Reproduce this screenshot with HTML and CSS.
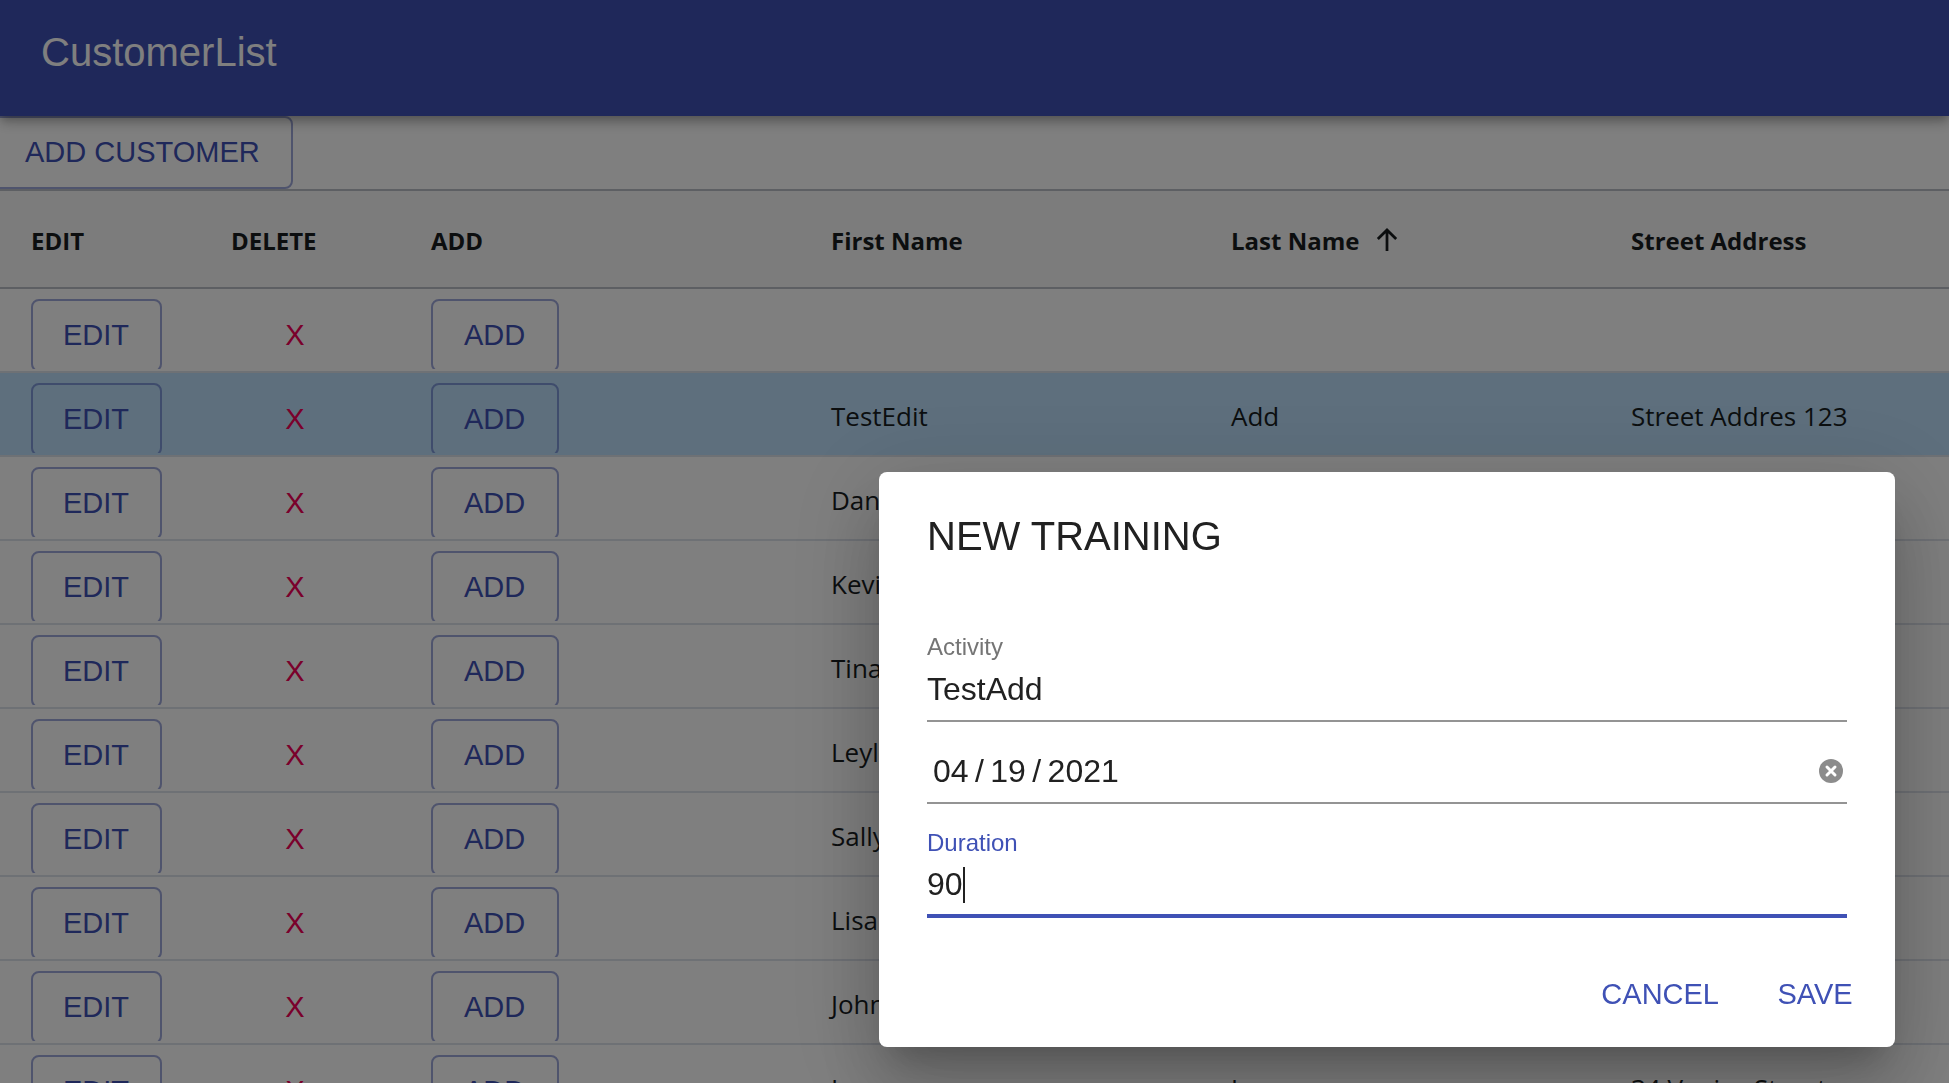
FILE: index.html
```html
<!DOCTYPE html>
<html lang="en">
<head>
<meta charset="utf-8">
<title>CustomerList</title>
<link rel="stylesheet" href="styles.css">
</head>
<body>
<header class="appbar"><h1 class="appbar-title">CustomerList</h1></header>
<main>
<div class="toolbar"><button class="btn btn-outlined" type="button">ADD CUSTOMER</button></div>
<div class="grid-scroll">
<table class="grid">
<colgroup><col class="col-s"><col class="col-s"><col><col><col><col></colgroup>
<thead>
<tr><th>EDIT</th><th>DELETE</th><th>ADD</th><th>First Name</th><th><span class="sorted">Last Name <svg class="sort-icon" viewBox="0 0 24 28" aria-hidden="true"><path d="M12 26V3M2 13L12 3l10 10"/></svg></span></th><th>Street Address</th></tr>
</thead>
<tbody>
<tr><td><div class="clip"><button class="btn btn-outlined" type="button">EDIT</button></div></td><td><div class="clip"><button class="btn btn-delete" type="button">X</button></div></td><td><div class="clip"><button class="btn btn-outlined" type="button">ADD</button></div></td><td></td><td></td><td></td></tr>
<tr class="selected"><td><div class="clip"><button class="btn btn-outlined" type="button">EDIT</button></div></td><td><div class="clip"><button class="btn btn-delete" type="button">X</button></div></td><td><div class="clip"><button class="btn btn-outlined" type="button">ADD</button></div></td><td>TestEdit</td><td>Add</td><td>Street Addres 123</td></tr>
<tr><td><div class="clip"><button class="btn btn-outlined" type="button">EDIT</button></div></td><td><div class="clip"><button class="btn btn-delete" type="button">X</button></div></td><td><div class="clip"><button class="btn btn-outlined" type="button">ADD</button></div></td><td>Dan</td><td></td><td></td></tr>
<tr><td><div class="clip"><button class="btn btn-outlined" type="button">EDIT</button></div></td><td><div class="clip"><button class="btn btn-delete" type="button">X</button></div></td><td><div class="clip"><button class="btn btn-outlined" type="button">ADD</button></div></td><td>Kevin</td><td></td><td></td></tr>
<tr><td><div class="clip"><button class="btn btn-outlined" type="button">EDIT</button></div></td><td><div class="clip"><button class="btn btn-delete" type="button">X</button></div></td><td><div class="clip"><button class="btn btn-outlined" type="button">ADD</button></div></td><td>Tina</td><td></td><td></td></tr>
<tr><td><div class="clip"><button class="btn btn-outlined" type="button">EDIT</button></div></td><td><div class="clip"><button class="btn btn-delete" type="button">X</button></div></td><td><div class="clip"><button class="btn btn-outlined" type="button">ADD</button></div></td><td>Leyla</td><td></td><td></td></tr>
<tr><td><div class="clip"><button class="btn btn-outlined" type="button">EDIT</button></div></td><td><div class="clip"><button class="btn btn-delete" type="button">X</button></div></td><td><div class="clip"><button class="btn btn-outlined" type="button">ADD</button></div></td><td>Sally</td><td></td><td></td></tr>
<tr><td><div class="clip"><button class="btn btn-outlined" type="button">EDIT</button></div></td><td><div class="clip"><button class="btn btn-delete" type="button">X</button></div></td><td><div class="clip"><button class="btn btn-outlined" type="button">ADD</button></div></td><td>Lisa</td><td></td><td></td></tr>
<tr><td><div class="clip"><button class="btn btn-outlined" type="button">EDIT</button></div></td><td><div class="clip"><button class="btn btn-delete" type="button">X</button></div></td><td><div class="clip"><button class="btn btn-outlined" type="button">ADD</button></div></td><td>John</td><td></td><td></td></tr>
<tr><td><div class="clip"><button class="btn btn-outlined" type="button">EDIT</button></div></td><td><div class="clip"><button class="btn btn-delete" type="button">X</button></div></td><td><div class="clip"><button class="btn btn-outlined" type="button">ADD</button></div></td><td>Lea</td><td>Jones</td><td>34 Venice Street</td></tr>
</tbody>
</table>
</div>
</main>
<div class="backdrop">
<form class="dialog" role="dialog" aria-labelledby="dialog-title">
<h2 class="dialog-title" id="dialog-title">NEW TRAINING</h2>
<div class="dialog-content">
<div class="field">
<label class="field-label" for="activity">Activity</label>
<div class="field-box"><input class="field-input" id="activity" type="text" value="TestAdd"></div>
</div>
<div class="field field-date">
<div class="field-box"><input class="field-input" id="date" type="text" aria-label="Date" value="04&#8201;/&#8201;19&#8201;/&#8201;2021"><button class="clear" type="button" aria-label="Clear"><svg viewBox="0 0 24 24" aria-hidden="true"><circle cx="12" cy="12" r="12"/><path d="M8 8l8 8M16 8l-8 8"/></svg></button></div>
</div>
<div class="field field-focused">
<label class="field-label" for="duration">Duration</label>
<div class="field-box"><input class="field-input" id="duration" type="text" value="90"><span class="caret"></span></div>
</div>
</div>
<div class="dialog-actions"><button class="btn btn-text" type="button">CANCEL</button><button class="btn btn-text" type="button">SAVE</button></div>
</form>
</div>
</body>
</html>
```

FILE: styles.css
```css
* { box-sizing: border-box; }

html { height: 100%; }

body {
  height: 100%;
  margin: 0;
  overflow: hidden;
  background: #fff;
  font-family: "Liberation Sans", Arial, sans-serif;
}

.appbar {
  position: relative;
  z-index: 1;
  height: 116px;
  padding: 20px 41px;
  background: #3f51b5;
  color: #fff;
  box-shadow: 0 4px 8px -2px rgba(0, 0, 0, .2), 0 8px 10px 0 rgba(0, 0, 0, .14), 0 2px 20px 0 rgba(0, 0, 0, .12);
}

.appbar-title { margin: 0; font-size: 40px; font-weight: 400; line-height: 64px; }

.toolbar { display: flex; margin-left: -7px; }

.btn {
  min-width: 128px;
  height: 73px;
  padding: 0 16px 2px;
  border: 0;
  border-radius: 8px;
  background: none;
  color: #3f51b5;
  font: 400 29px/48px "Liberation Sans", Arial, sans-serif;
  white-space: nowrap;
}

.btn-outlined { padding: 0 31px 2px 30px; border: 2px solid rgba(63, 81, 181, .5); }

.btn-delete { color: #f50057; }

.grid-scroll { overflow: hidden; border-top: 2px solid #babfc7; }

.grid {
  width: 2000px;
  table-layout: fixed;
  border-collapse: separate;
  border-spacing: 0;
  color: #181d1f;
  font-family: "Segoe UI", "Open Sans", sans-serif;
  font-size: 26px;
}

.col-s { width: 200px; }

.grid th {
  height: 98px;
  padding: 2px 0 0 31px;
  border-bottom: 2px solid #babfc7;
  background: #f8f8f8;
  font-size: 24px;
  font-weight: 700;
  text-align: left;
}

.grid td {
  height: 84px;
  padding: 4px 0 0 31px;
  border-bottom: 2px solid #dde2eb;
  line-height: 36px;
  white-space: nowrap;
}

.grid td:nth-child(-n+3) { padding-top: 0; }

.selected td { background: rgba(33, 150, 243, .3); }

.clip { display: flex; height: 80px; margin-bottom: 2px; padding-top: 10px; overflow: hidden; }
.clip .btn { flex: none; }

.sorted { display: flex; align-items: center; gap: 17px; }
.sort-icon { width: 22px; height: 26px; fill: none; stroke: #181d1f; stroke-width: 3; }

.backdrop {
  position: fixed;
  inset: 0;
  z-index: 2;
  display: flex;
  align-items: flex-end;
  justify-content: flex-end;
  padding: 0 54px 36px;
  background: rgba(0, 0, 0, .5);
}

.dialog {
  width: 1016px;
  max-width: 100%;
  border-radius: 8px;
  background: #fff;
  color: #212121;
  box-shadow: 0 22px 30px -14px rgba(0, 0, 0, .2), 0 48px 76px 6px rgba(0, 0, 0, .14), 0 18px 92px 16px rgba(0, 0, 0, .12);
}

.dialog-title { margin: 0; padding: 32px 48px; font-size: 40px; font-weight: 400; line-height: 64px; }

.dialog-content { padding: 34px 48px 24px; }

.field-label { display: block; height: 24px; color: #757575; font-size: 24px; line-height: 26px; }

.field-box {
  position: relative;
  display: flex;
  align-items: center;
  height: 64px;
  border-bottom: 2px solid #949494;
}

.field-input {
  flex: 1;
  min-width: 0;
  height: 62px;
  padding: 0;
  border: 0;
  outline: 0;
  background: none;
  color: #212121;
  font: 400 32px/38px "Liberation Sans", Arial, sans-serif;
}

.field-date { margin: 18px 0 26px; }
.field-date .field-box { padding: 0 4px 0 6px; }

.clear { display: flex; padding: 0; border: 0; background: none; }
.clear svg { width: 24px; height: 24px; fill: #8c8c8c; stroke: #fff; stroke-width: 0; }
.clear path { stroke-width: 3; stroke-linecap: round; }

.field-focused .field-label { color: #3f51b5; }
.field-focused .field-box { border-bottom: 4px solid #3f51b5; }

.caret { position: absolute; top: 13px; left: 36px; width: 2px; height: 36px; background: #212121; }

.dialog-actions { display: flex; justify-content: flex-end; gap: 16px; padding: 16px; }
```
